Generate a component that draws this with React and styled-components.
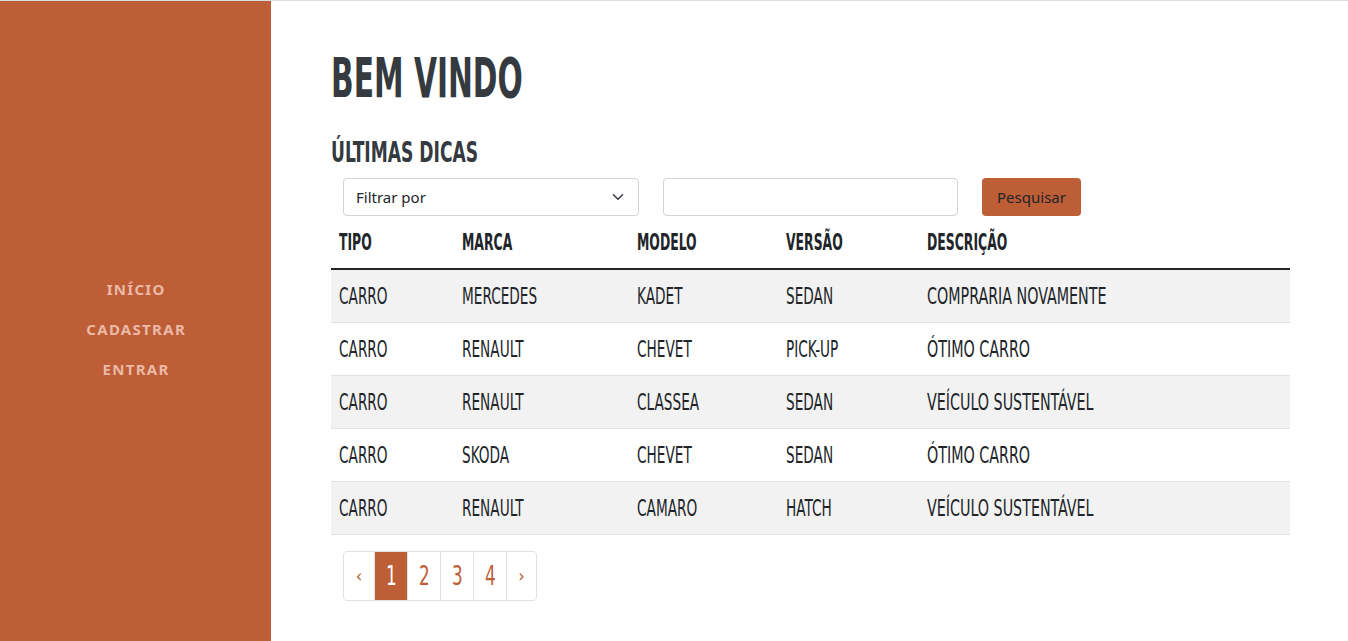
import React from 'react';
import styled, { createGlobalStyle } from 'styled-components';

const GlobalStyle = createGlobalStyle`
    * { box-sizing: border-box; }
    html, body {
        margin: 0;
        padding: 0;
        background: #ffffff;
    }
    body {
        font-family: "Noto Sans", "Lato", sans-serif;
        color: #212529;
    }
`

const COND = `"DejaVu Sans Condensed", "DejaVu Sans", sans-serif`;

const rows = [
    { tipo: 'CARRO', marca: 'MERCEDES', modelo: 'KADET', versao: 'SEDAN', descricao: 'COMPRARIA NOVAMENTE' },
    { tipo: 'CARRO', marca: 'RENAULT', modelo: 'CHEVET', versao: 'PICK-UP', descricao: 'ÓTIMO CARRO' },
    { tipo: 'CARRO', marca: 'RENAULT', modelo: 'CLASSEA', versao: 'SEDAN', descricao: 'VEÍCULO SUSTENTÁVEL' },
    { tipo: 'CARRO', marca: 'SKODA', modelo: 'CHEVET', versao: 'SEDAN', descricao: 'ÓTIMO CARRO' },
    { tipo: 'CARRO', marca: 'RENAULT', modelo: 'CAMARO', versao: 'HATCH', descricao: 'VEÍCULO SUSTENTÁVEL' },
];

const headers = ['TIPO', 'MARCA', 'MODELO', 'VERSÃO', 'DESCRIÇÃO'];
const colWidths = [123, 175, 149, 141];

const App = () => {
    return (
        <>
            <GlobalStyle />
            <Page>
                <Sidebar>
                    <NavLink href="#">Início</NavLink>
                    <NavLink href="#">Cadastrar</NavLink>
                    <NavLink href="#">Entrar</NavLink>
                </Sidebar>

                <Main>
                    <Title><Narrow $scale={0.59}>BEM VINDO</Narrow></Title>
                    <Subtitle><Narrow $scale={0.68}>ÚLTIMAS DICAS</Narrow></Subtitle>

                    <FilterRow>
                        <SelectBox>
                            <span>Filtrar por</span>
                            <svg width="12" height="12" viewBox="0 0 16 16" fill="none" stroke="#343a40" strokeWidth="2" strokeLinecap="round" strokeLinejoin="round">
                                <path d="M2 5l6 6 6-6" />
                            </svg>
                        </SelectBox>
                        <SearchInput />
                        <SearchButton>Pesquisar</SearchButton>
                    </FilterRow>

                    <Table>
                        <colgroup>
                            {colWidths.map(w => <col key={w} style={{ width: w }} />)}
                            <col />
                        </colgroup>
                        <thead>
                            <tr>
                                {headers.map(h => (
                                    <Th key={h}><Narrow $scale={0.6}>{h}</Narrow></Th>
                                ))}
                            </tr>
                        </thead>
                        <tbody>
                            {rows.map((r, i) => (
                                <Row key={i} $striped={i % 2 === 0}>
                                    <Td><Narrow $scale={0.66}>{r.tipo}</Narrow></Td>
                                    <Td><Narrow $scale={0.66}>{r.marca}</Narrow></Td>
                                    <Td><Narrow $scale={0.66}>{r.modelo}</Narrow></Td>
                                    <Td><Narrow $scale={0.66}>{r.versao}</Narrow></Td>
                                    <Td><Narrow $scale={0.69}>{r.descricao}</Narrow></Td>
                                </Row>
                            ))}
                        </tbody>
                    </Table>

                    <Pagination>
                        <PageItem $small>‹</PageItem>
                        {[1, 2, 3, 4].map(n => (
                            <PageItem key={n} $active={n === 1}>
                                <Narrow $scale={0.72} $center>{n}</Narrow>
                            </PageItem>
                        ))}
                        <PageItem $small>›</PageItem>
                    </Pagination>
                </Main>
            </Page>
        </>
    )
}

export default App;

const Page = styled.div`
    display: flex;
    width: 100%;
    min-height: 641px;
    border-top: 1px solid #dcdde0;
`

const Sidebar = styled.nav`
    width: 271px;
    flex-shrink: 0;
    background: #be5e37;
    display: flex;
    flex-direction: column;
    align-items: center;
    justify-content: center;
    gap: 18px;
    padding-top: 16px;
`

const NavLink = styled.a`
    color: #ebb9a6;
    text-decoration: none;
    text-transform: uppercase;
    font-family: "Noto Sans", "Lato", sans-serif;
    font-weight: 700;
    font-size: 15px;
    letter-spacing: 1.3px;
    line-height: 22px;
    margin-right: -1.3px;
`

const Narrow = styled.span`
    display: inline-block;
    white-space: nowrap;
    transform: scaleX(${p => p.$scale || 0.65});
    transform-origin: ${p => p.$center ? 'center' : 'left'} center;
`

const Main = styled.main`
    flex: 1;
    padding: 41px 58px 0 60px;
`

const Title = styled.h1`
    margin: 0;
    font-family: ${COND};
    font-weight: 700;
    font-size: 56px;
    line-height: 72px;
    color: #343a40;
`

const Subtitle = styled.h2`
    margin: 21px 0 0;
    font-family: ${COND};
    font-weight: 700;
    font-size: 28px;
    line-height: 36px;
    color: #343a40;
`

const FilterRow = styled.div`
    display: flex;
    align-items: center;
    gap: 24px;
    padding-left: 12px;
    margin-top: 7px;
`

const SelectBox = styled.div`
    width: 296px;
    height: 38px;
    border: 1px solid #ced4da;
    border-radius: 4px;
    display: flex;
    align-items: center;
    justify-content: space-between;
    padding: 0 14px 0 12px;
    font-size: 15px;
    color: #212529;
`

const SearchInput = styled.input`
    width: 295px;
    height: 38px;
    border: 1px solid #ced4da;
    border-radius: 4px;
    outline: none;
`

const SearchButton = styled.button`
    height: 38px;
    width: 99px;
    border: none;
    border-radius: 4px;
    background: #be5e37;
    color: #212529;
    font-family: "Noto Sans", "Lato", sans-serif;
    font-size: 15px;
`

const Table = styled.table`
    width: 959px;
    margin-top: 0;
    border-collapse: collapse;
    table-layout: fixed;
    font-family: ${COND};
    color: #212529;
`

const Th = styled.th`
    text-align: left;
    font-weight: 700;
    font-size: 23px;
    height: 53px;
    padding: 0 8px;
    border-bottom: 2px solid #212529;
`

const Row = styled.tr`
    background: ${p => (p.$striped ? '#f2f2f2' : '#ffffff')};
    border-bottom: 1px solid #dee2e6;
`

const Td = styled.td`
    font-size: 23px;
    height: 53px;
    padding: 0 8px;
    white-space: nowrap;
`

const Pagination = styled.div`
    display: inline-flex;
    margin: 16px 0 0 12px;
    border: 1px solid #dee2e6;
    border-radius: 4px;
    overflow: hidden;
`

const PageItem = styled.span`
    display: flex;
    align-items: center;
    justify-content: center;
    height: 48px;
    width: ${p => (p.$small ? '30px' : '33px')};
    font-family: ${COND};
    font-size: ${p => (p.$small ? '18px' : '26px')};
    color: ${p => (p.$active ? '#ffffff' : '#be5e37')};
    background: ${p => (p.$active ? '#be5e37' : '#ffffff')};
    & + & {
        border-left: ${p => (p.$active ? 'none' : '1px solid #dee2e6')};
    }
`
